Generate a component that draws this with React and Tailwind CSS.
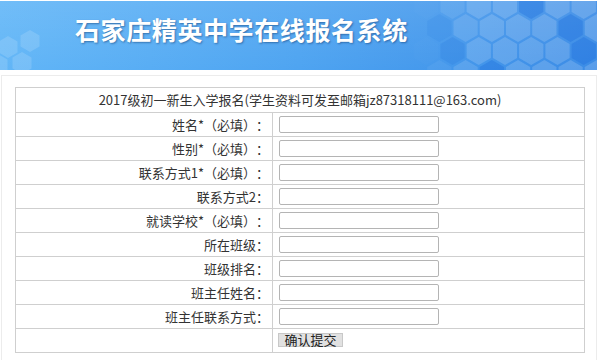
import React from "react";

const FIELDS = [
  "姓名*（必填）：",
  "性别*（必填）：",
  "联系方式1*（必填）：",
  "联系方式2：",
  "就读学校*（必填）：",
  "所在班级：",
  "班级排名：",
  "班主任姓名：",
  "班主任联系方式：",
];

// 横幅右侧的六边形底纹
function hexPath(cx, cy, r) {
  const pts = [];
  for (let i = 0; i < 6; i++) {
    const a = (Math.PI / 180) * (60 * i - 90);
    pts.push(`${(cx + r * Math.cos(a)).toFixed(1)},${(cy + r * Math.sin(a)).toFixed(1)}`);
  }
  return pts.join(" ");
}

function Hexes() {
  const r = 14;
  const w = r * Math.sqrt(3) + 2;
  const h = r * 1.5 + 2;
  const cells = [];
  for (let row = -1; row < 5; row++) {
    for (let col = 0; col < 11; col++) {
      const cx = 400 + col * w + (row % 2 ? w / 2 : 0);
      const cy = row * h + 4;
      const k = (row * 7 + col * 3) % 5;
      const fill = k === 0 ? "rgba(30,110,220,0.35)" : "rgba(255,255,255,0.16)";
      const fade = Math.min(1, Math.max(0, (cx - 420) / 60));
      cells.push(<polygon key={`${row}-${col}`} points={hexPath(cx, cy, r)} fill={fill} opacity={fade} />);
    }
  }
  const left = [
    [8, 46], [30, 40], [22, 62], [-2, 64],
  ];
  return (
    <svg className="absolute inset-0" width="597" height="69" viewBox="0 0 597 69">
      {cells}
      {left.map(([x, y], i) => (
        <polygon key={i} points={hexPath(x, y, 11)} fill="rgba(255,255,255,0.14)" />
      ))}
    </svg>
  );
}

export default function App() {
  return (
    <div className="w-[600px] h-[360px] overflow-hidden bg-white [text-spacing-trim:space-all]" style={{ fontFamily: '"Noto Sans CJK SC", "Noto Sans", sans-serif' }}>
      {/* 横幅 */}
      <div className="relative mt-px h-[69px] w-[597px] overflow-hidden bg-gradient-to-r from-[#62b6f7] via-[#4ea4f1] to-[#3a8be6]">
        <div className="absolute inset-0 bg-gradient-to-b from-white/10 to-transparent" />
        <Hexes />
        <div className="absolute left-[75px] top-[12px] text-[25px] font-bold tracking-[0.6px] leading-[32px] text-white [text-shadow:1px_1px_2px_rgba(0,40,90,0.45)]">
          石家庄精英中学在线报名系统
        </div>
      </div>

      {/* 表单外框 */}
      <div className="mt-[5px] ml-px w-[596px] h-[300px] border border-[#ececec] pt-[11px] pl-[13px]">
        <table className="w-[570px] border-collapse text-[13px] text-[#333]">
          <tbody>
            <tr>
              <td colSpan={2} className="h-[25px] border border-[#cfcfcf] p-0 text-center leading-[24px]">
                2017级初一新生入学报名(学生资料可发至邮箱jz87318111@163.com)
              </td>
            </tr>
            {FIELDS.map((f) => (
              <tr key={f}>
                <td className="h-[24px] w-[257px] border border-[#cfcfcf] p-0 pr-[3px] text-right leading-[23px]">{f}</td>
                <td className="h-[24px] border border-[#cfcfcf] p-0 pl-[6px]">
                  <input type="text" className="block h-[17px] w-[160px] rounded-[2px] border border-[#b4b4b4] bg-white" />
                </td>
              </tr>
            ))}
            <tr>
              <td className="h-[24px] border border-[#cfcfcf] p-0" />
              <td className="h-[24px] border border-[#cfcfcf] p-0 pl-[5px] align-top">
                <button className="mt-[4px] h-[14px] w-[65px] border border-[#c8c8c8] bg-[#e1e1e1] text-[13px] leading-[12px] text-[#222]">
                  确认提交
                </button>
              </td>
            </tr>
          </tbody>
        </table>
      </div>
    </div>
  );
}
